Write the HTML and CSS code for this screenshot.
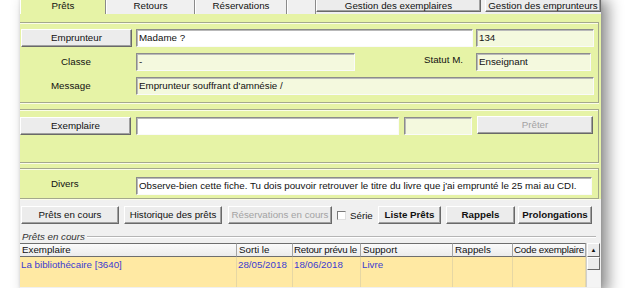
FILE: index.html
```html
<!DOCTYPE html>
<html lang="fr">
<head>
  <meta charset="UTF-8" />
  <title>Prêts</title>
  <link rel="stylesheet" href="styles.css">
</head>
<body>
  <div class="window">

    <div class="tabbar">
      <div class="tab active">Prêts</div>
      <div class="tab tab-retours">Retours</div>
      <div class="tab tab-resa">Réservations</div>
      <div class="tab tab-blank"></div>
      <div class="btn top-btn gestion-ex">Gestion des exemplaires</div>
      <div class="btn top-btn gestion-emp">Gestion des emprunteurs</div>
    </div>

    <div class="panel">
      <div class="group g-emprunteur">
        <div class="row">
          <div class="btn btn-label">Emprunteur</div>
          <div class="field f-name white">Madame ?</div>
          <div class="field f-num">134</div>
        </div>
        <div class="row">
          <div class="label l-classe">Classe</div>
          <div class="field f-classe">-</div>
          <div class="label l-statut">Statut M.</div>
          <div class="field f-statut">Enseignant</div>
        </div>
        <div class="row">
          <div class="label l-message">Message</div>
          <div class="field f-message">Emprunteur souffrant d'amnésie /</div>
        </div>
      </div>

      <div class="group g-exemplaire">
        <div class="row">
          <div class="btn btn-label btn-ex">Exemplaire</div>
          <div class="field f-ex white"></div>
          <div class="field f-ex2"></div>
          <div class="btn disabled btn-preter">Prêter</div>
        </div>
      </div>

      <div class="group g-divers">
        <div class="row">
          <div class="label l-divers">Divers</div>
          <div class="field f-divers white">Observe-bien cette fiche. Tu dois pouvoir retrouver le titre du livre que j'ai emprunté le 25 mai au CDI.</div>
        </div>
      </div>
    </div>

    <div class="lower">
      <div class="actions">
        <div class="btn a-encours">Prêts en cours</div>
        <div class="btn a-histo">Historique des prêts</div>
        <div class="btn disabled a-resa">Réservations en cours</div>
        <div class="checkbox"></div>
        <div class="check-label">Série</div>
        <div class="btn bold a-liste">Liste Prêts</div>
        <div class="btn bold a-rappels">Rappels</div>
        <div class="btn bold a-prolong">Prolongations</div>
      </div>

      <div class="loans-title">
        <span>Prêts en cours</span>
        <div class="loans-line"></div>
      </div>

      <div class="loans">
        <div class="th">Exemplaire</div>
        <div class="th">Sorti le</div>
        <div class="th th-tight">Retour prévu le</div>
        <div class="th">Support</div>
        <div class="th">Rappels</div>
        <div class="th th-tight">Code exemplaire</div>
        <div class="scrollbar">
          <div class="sb-up">&#9650;</div>
          <div class="sb-thumb"></div>
        </div>
        <div class="td">La bibliothécaire [3640]</div>
        <div class="td">28/05/2018</div>
        <div class="td">18/06/2018</div>
        <div class="td">Livre</div>
        <div class="td"></div>
        <div class="td"></div>
      </div>
    </div>

  </div>
</body>
</html>
```

FILE: styles.css
```css
* {
  margin: 0;
  padding: 0;
  box-sizing: border-box;
}

body {
  background: #fff;
  font-family: 'Liberation Sans', Arial, sans-serif;
  font-size: 9.75px;
  color: #111;
  overflow: hidden;
}

.window {
  margin: -6px 0 0 20px;
  width: 581px;
  height: 294px;
  background: #f0f0f0;
  box-shadow: 7px 6px 14px rgba(0, 0, 0, 0.45), 0 0 3px rgba(0, 0, 0, 0.12);
  overflow: hidden;
}

/* tabs */
.tabbar {
  display: flex;
  height: 20px;
  background: #f0f0f0;
}

.tab {
  height: 20px;
  padding-top: 2px;
  line-height: 18px;
  text-align: center;
  background: #f0f0f0;
  border-left: 1px solid #fff;
  border-top: 1px solid #fff;
  border-right: 1px solid #8a8a8a;
}

.tab.active {
  width: 86px;
  background: #e6f3a6;
}

.tab-retours { width: 89px; }
.tab-resa { width: 92px; }
.tab-blank { width: 29px; }

.top-btn {
  height: 19px;
  padding-top: 3px;
  line-height: 14px;
}

.gestion-ex { width: 165px; }
.gestion-emp { width: 116px; margin-left: 4px; }

/* generic controls */
.btn {
  height: 18px;
  line-height: 16px;
  text-align: center;
  white-space: nowrap;
  overflow: hidden;
  background: #ececec;
  border: 1px solid;
  border-color: #fff #696969 #696969 #fff;
  box-shadow: inset -1px -1px 0 #a0a0a0;
}

.btn.disabled {
  color: #a3a3a3;
}

.btn.bold {
  font-weight: bold;
}

.field {
  height: 18px;
  line-height: 16px;
  padding-left: 2px;
  white-space: nowrap;
  overflow: hidden;
  background: #f4f9de;
  border: 1px solid;
  border-color: #8c8c8c #fafafa #fafafa #8c8c8c;
  box-shadow: inset 1px 1px 0 #b9b9b9;
}

.field.white {
  background: #fff;
}

.label {
  width: 111px;
  height: 18px;
  line-height: 17px;
}

/* green panel */
.panel {
  height: 185px;
  background: #e6f3a6;
  padding-top: 8px;
}

.group {
  border-top: 1px solid #a4a88d;
  border-bottom: 1px solid #a4a88d;
  border-right: 1px solid #a4a88d;
  margin-right: 2px;
  box-shadow: inset 0 1px 0 #fbfde9, 0 1px 0 #fbfde9;
}

.g-emprunteur {
  height: 81px;
  padding-top: 6px;
  display: flex;
  flex-direction: column;
  gap: 6px;
}

.g-exemplaire {
  height: 54px;
  margin-top: 6px;
  padding-top: 7px;
}

.g-divers {
  height: 31px;
  margin-top: 5px;
  padding-top: 8px;
}

.row {
  display: flex;
  align-items: flex-start;
}

.btn-label { width: 111px; margin-left: 1px; }
.btn-ex { margin-left: 0; }

.f-name { width: 337px; margin-left: 4px; }
.f-num { width: 118px; margin-left: 3px; }

.l-classe { padding-left: 40px; margin-left: 1px; }
.f-classe { width: 219px; margin-left: 4px; }
.l-statut { width: 116px; text-align: right; padding-right: 8px; line-height: 14px; }
.f-statut { width: 115px; margin-left: 5px; }

.l-message { padding-left: 30px; margin-left: 1px; }
.f-message { width: 458px; margin-left: 4px; }

.f-ex { width: 263px; margin-left: 5px; }
.f-ex2 { width: 68px; margin-left: 5px; }
.btn-preter { width: 116px; margin-left: 5px; margin-top: -1px; }

.l-divers { padding-left: 30px; margin-left: 1px; line-height: 14px; }
.f-divers { width: 456px; margin-left: 4px; }

/* lower area */
.lower {
  height: 89px;
  padding-top: 7px;
}

.actions {
  display: flex;
  align-items: center;
  height: 18px;
}

.a-encours { width: 98px; margin-left: 1px; }
.a-histo { width: 98px; margin-left: 5px; }
.a-resa { width: 104px; margin-left: 6px; }

.checkbox {
  width: 9px;
  height: 9px;
  margin-left: 5px;
  background: #fff;
  border: 1px solid;
  border-color: #7a7a7a #e0e0e0 #e0e0e0 #7a7a7a;
}

.check-label { margin-left: 4px; width: 24px; }

.a-liste { width: 63px; margin-left: 4px; }
.a-rappels { width: 69px; margin-left: 5px; }
.a-prolong { width: 74px; margin-left: 3px; }

.loans-title {
  display: flex;
  align-items: center;
  height: 14px;
  margin-top: 5px;
  padding-left: 2px;
  font-style: italic;
  color: #333;
}

.loans-line {
  flex: 1;
  height: 2px;
  margin: 1px 5px 0 2px;
  border-top: 1px solid #b5b5b5;
  border-bottom: 1px solid #fff;
}

.loans {
  display: grid;
  grid-template-columns: 217px 56px 68px 92px 60px 73px 14px;
  grid-template-rows: 14px 30px;
}

.th {
  height: 14px;
  line-height: 12px;
  padding-left: 2px;
  white-space: nowrap;
  overflow: hidden;
  background: linear-gradient(#fbfbfb, #ececec);
  border-top: 1px solid #6e6e6e;
  border-bottom: 1px solid #6e6e6e;
  border-right: 1px solid #a5a5a5;
}

.th-tight {
  padding-left: 1px;
  letter-spacing: -0.25px;
}

.td {
  padding: 2px 0 0 1px;
  white-space: nowrap;
  color: #3b3bd2;
  background: #ffe9a3;
  border-right: 1px solid #e6d7a4;
}

.scrollbar {
  grid-column: 7;
  grid-row: 1 / 3;
  background: #f4f4f4;
  border-left: 1px solid #d0d0d0;
}

.sb-up {
  height: 14px;
  font-size: 6px;
  line-height: 12px;
  text-align: center;
  background: #ececec;
  border: 1px solid;
  border-color: #fff #696969 #696969 #fff;
}

.sb-thumb {
  height: 13px;
  background: #ececec;
  border: 1px solid;
  border-color: #fff #696969 #696969 #fff;
}
```
